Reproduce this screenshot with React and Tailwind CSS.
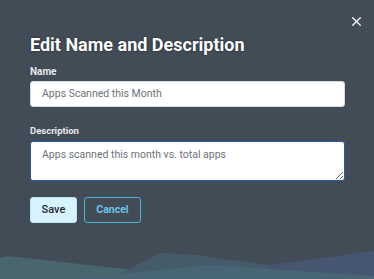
import { X } from 'lucide-react'

function Waves() {
  return (
    <svg
      className="absolute left-0 bottom-0 pointer-events-none"
      width="374"
      height="40"
      viewBox="0 239 374 40"
    >
      <polygon points="0,258 8,256 115,268 250,279 0,279" fill="#49656e" />
      <polygon points="110,279 160,253 195,255 268,265 320,279" fill="#445c6a" />
      <polygon points="255,279 270,265 374,251 374,279" fill="#475670" />
      <polygon points="70,279 210,265 374,276 374,279" fill="#486574" />
    </svg>
  )
}

function App() {
  return (
    <div className="relative w-[374px] h-[279px] overflow-hidden bg-[#424c57] font-['Roboto',sans-serif]">
      <button className="absolute right-[10px] top-[14px] text-white" aria-label="Close">
        <X size={15} strokeWidth={2} />
      </button>

      <div className="relative flex flex-col px-[30px] pt-[33px]">
        <h2 className="text-[18px] leading-[24px] font-bold text-white [text-shadow:0_0_2px_rgba(0,0,0,0.6)]">
          Edit Name and Description
        </h2>

        <label className="mt-[8px] text-[10px] leading-[14px] font-bold text-[#e4e7eb]">Name</label>
        <div className="mt-[2px] flex h-[26px] w-[315px] items-center rounded-[3px] border border-[#d6dbe0] bg-white pl-[11px] text-[10.5px] text-[#6d737a]">
          Apps Scanned this Month
        </div>

        <label className="mt-[17px] text-[9.5px] leading-[14px] font-bold text-[#e4e7eb]">Description</label>
        <textarea
          readOnly
          value="Apps scanned this month vs. total apps"
          className="mt-[3px] h-[40px] w-[315px] rounded-[3px] border border-[#2a5aa0] bg-white pl-[11px] pr-[11px] pt-[5px] text-[10.5px] leading-[16px] text-[#6d737a] outline-none"
        />

        <div className="mt-[16px] flex gap-[7px]">
          <button className="h-[26px] w-[47px] rounded-[3px] border border-[#bfe6f7] bg-[#d7f3ff] text-[11px] font-medium text-[#1f2933]">
            Save
          </button>
          <button className="h-[26px] w-[57px] rounded-[3px] border-[1.5px] border-[#4fb0d6] text-[10.5px] font-bold text-[#6cc4ea]">
            Cancel
          </button>
        </div>
      </div>

      <Waves />
    </div>
  )
}

export default App
